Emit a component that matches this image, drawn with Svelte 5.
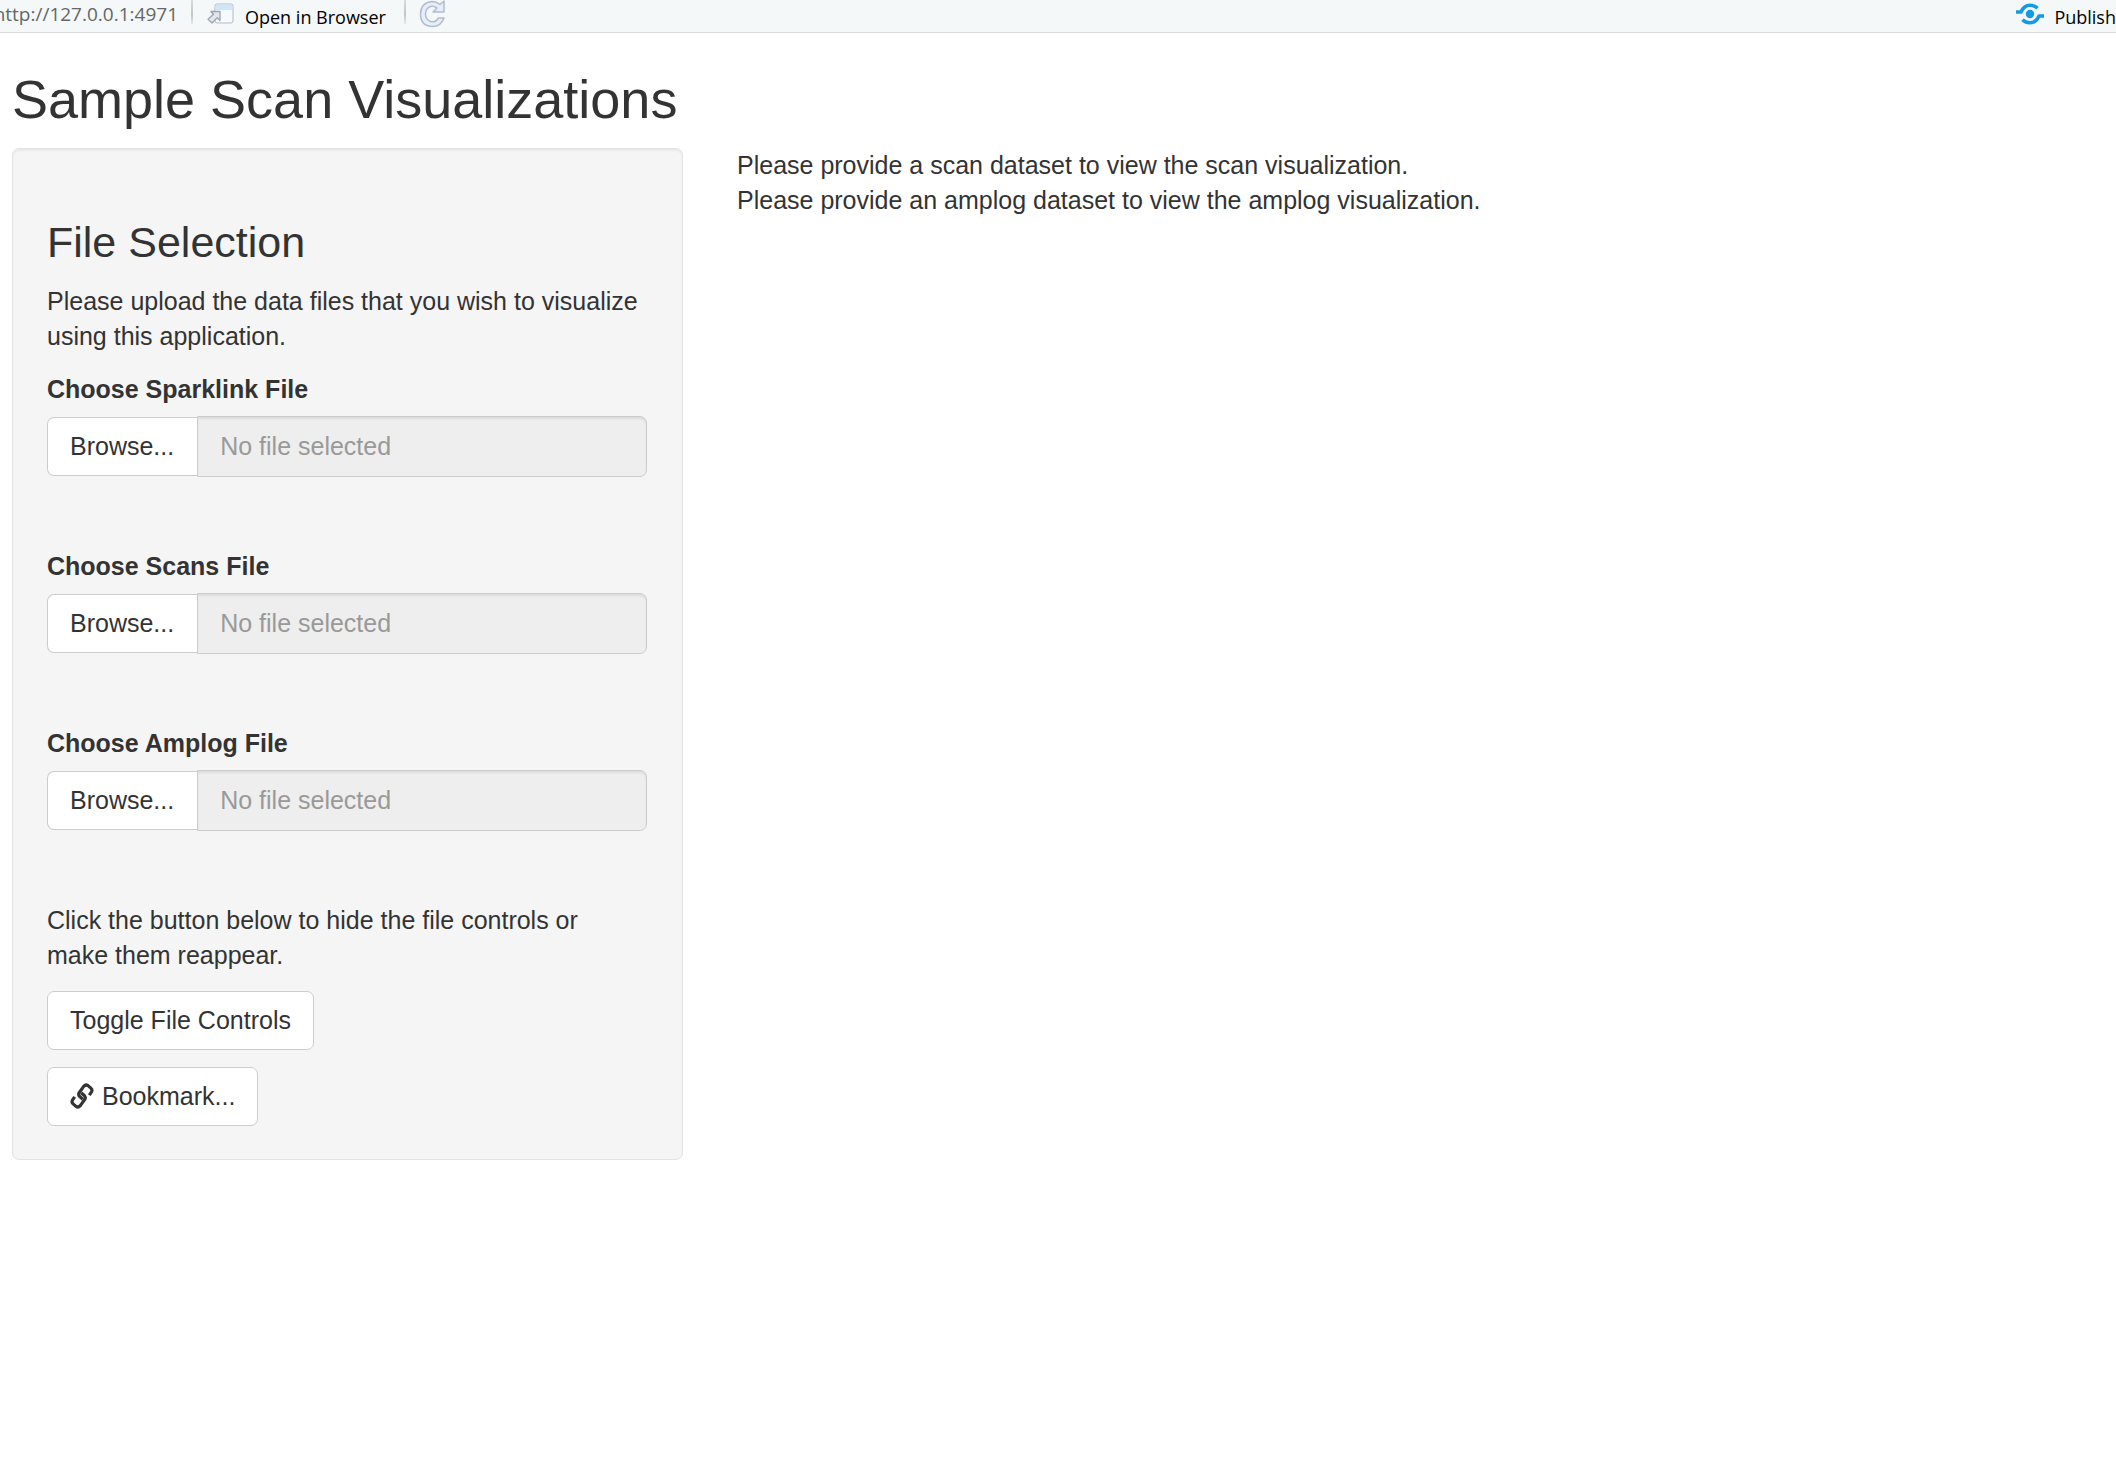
<script>
  let controlsVisible = $state(true);
  let files = $state([
    { id: 'sparklink', label: 'Choose Sparklink File', name: '' },
    { id: 'scans', label: 'Choose Scans File', name: '' },
    { id: 'amplog', label: 'Choose Amplog File', name: '' }
  ]);
  const pickers = {};

  function picked(file, event) {
    file.name = event.target.files[0]?.name ?? '';
  }
</script>

<header class="toolbar">
  <span class="url"><span>http://127.0.0.1:4971</span></span>
  <span class="divider"></span>
  <button class="tool open" type="button">
    <svg width="28" height="22" viewBox="0 0 28 22" aria-hidden="true">
      <rect x="9" y="1" width="18" height="19" rx="2" fill="#f6f9fd" stroke="#b1bac7" />
      <path d="M9.500 7V3q0-1.500 1.500-1.500h14q1.500 0 1.500 1.500v4z" fill="#cde6fb" />
      <path d="M5 8.500h9v9l-2.800-2.800-5.200 5.300-4-3.700 5.500-5z" fill="#e3e7eb" stroke="#9ca5b0" stroke-width="1.300" stroke-linejoin="round" />
    </svg>
    <span>Open in Browser</span>
  </button>
  <span class="divider"></span>
  <button class="tool reload" type="button" aria-label="Reload">
    <svg width="27" height="28" viewBox="0 0 27 28" aria-hidden="true">
      <path d="M25 1v11H14l4-4Q15 5.500 11.500 6.500 6.500 8.500 6.500 14t5 7.500q5 1.500 8-3.500h5.500Q22 26.500 13.500 26.500 1.500 26 1.500 14 2 2.500 13 1.500q4.500 0 8 3z" fill="#e6eefb" stroke="#b4bccb" stroke-width="1.500" stroke-linejoin="round" />
    </svg>
  </button>
  <button class="tool publish" type="button">
    <svg width="30" height="24" viewBox="0 0 30 24" aria-hidden="true">
      <circle cx="15" cy="11" r="4.200" fill="#1499e8" />
      <path d="M1 9h5Q9 2.300 15 2.300q4.500 0 7.500 3M29 13h-5Q21 19.700 15 19.700q-4.500 0-7.500-3" fill="none" stroke="#1499e8" stroke-width="3.600" stroke-linejoin="round" />
    </svg>
    <span>Publish</span>
  </button>
</header>

<main>
  <h1>Sample Scan Visualizations</h1>
  <div class="columns">
    <form class="panel" onsubmit={(e) => e.preventDefault()}>
      {#if controlsVisible}
        <h2>File Selection</h2>
        <p>Please upload the data files that you wish to visualize using this application.</p>
        {#each files as file (file.id)}
          <div class="field">
            <label for={file.id}>{file.label}</label>
            <div class="group">
              <button class="btn" type="button" onclick={() => pickers[file.id].click()}>Browse...</button>
              <input id={file.id} type="text" placeholder="No file selected" value={file.name} readonly />
              <input type="file" hidden bind:this={pickers[file.id]} onchange={(e) => picked(file, e)} />
            </div>
          </div>
        {/each}
      {/if}
      <p>Click the button below to hide the file controls or make them reappear.</p>
      <div class="actions">
        <button class="btn" type="button" onclick={() => (controlsVisible = !controlsVisible)}>Toggle File Controls</button>
        <button class="btn" type="button">
          <svg width="24" height="28" viewBox="0 0 24 28" aria-hidden="true">
            <g fill="none" stroke="#333" stroke-width="3.200" stroke-linejoin="round">
              <path d="M12.800 16.200 9.700 13.500Q8 11.500 9.200 9.600L13.700 3.400Q15.700 1.100 18 2.600L20.600 4.900Q22.900 6.900 21.400 9.200L19.300 12.200" />
              <path d="M12.800 16.200 9.700 13.500Q8 11.500 9.200 9.600L13.700 3.400Q15.700 1.100 18 2.600L20.600 4.900Q22.900 6.900 21.400 9.200L19.300 12.200" transform="rotate(180 12 13)" />
            </g>
          </svg>
          Bookmark...
        </button>
      </div>
    </form>
    <section class="output">
      <div>Please provide a scan dataset to view the scan visualization.</div>
      <div>Please provide an amplog dataset to view the amplog visualization.</div>
    </section>
  </div>
</main>

<style>
  :global(body) {
    margin: 0;
    background: #fff;
    color: #333;
    font: 25px/35px 'Liberation Sans', Arial, sans-serif;
  }

  .toolbar {
    display: flex;
    align-items: flex-start;
    height: 32px;
    overflow: hidden;
    background: #f4f8f9;
    border-bottom: 1px solid #d6dadc;
    font: 19px/28px 'Open Sans', 'Noto Sans', sans-serif;
  }

  .url {
    display: flex;
    justify-content: flex-end;
    width: 178px;
    color: #666;
  }

  .divider {
    width: 2px;
    height: 24px;
    margin: 0 13px;
    background: linear-gradient(#d8dbdd, #c2c5c8 60%, #e6e9ea);
  }

  .tool {
    display: flex;
    align-items: flex-start;
    padding: 0;
    border: 0;
    background: none;
    color: #000;
    font: inherit;
    font-size: 18px;
    line-height: 34px;
    white-space: nowrap;
  }

  .tool svg {
    flex: none;
  }

  .open {
    gap: 11px;
    padding-right: 5px;
  }

  .open svg,
  .publish svg {
    margin-top: 3px;
  }

  .publish {
    gap: 9px;
    margin-left: auto;
  }

  main {
    padding: 37px 37px 36px 12px;
  }

  h1,
  h2 {
    margin: 0;
    font-weight: 400;
  }

  h1 {
    margin-bottom: 20px;
    font-size: 54px;
    line-height: 58px;
  }

  h2 {
    margin: 36px 0 19px;
    font-size: 43px;
    line-height: 46px;
  }

  p {
    margin: 0 0 18px;
    padding-right: 4px;
  }

  .columns {
    display: grid;
    grid-template-columns: 1fr 2fr;
    gap: 54px;
    align-items: start;
  }

  .panel {
    display: flow-root;
    padding: 34px 35px 33px 34px;
    border: 1px solid #e3e3e3;
    border-radius: 7px;
    background: #f5f5f5;
    box-shadow: inset 0 2px 2px rgba(0, 0, 0, 0.05);
  }

  .field {
    margin-bottom: 72px;
  }

  label {
    display: block;
    margin-bottom: 9px;
    font-weight: 700;
  }

  .group {
    display: flex;
    align-items: center;
  }

  .btn {
    display: flex;
    align-items: center;
    gap: 8px;
    padding: 11px 22px;
    border: 1px solid #ccc;
    border-radius: 7px;
    background: #fff;
    color: #333;
    font: inherit;
    white-space: nowrap;
  }

  .group .btn {
    padding-right: 23px;
    border-right: 0;
    border-radius: 7px 0 0 7px;
  }

  input[type='text'] {
    flex: 1;
    min-width: 0;
    box-sizing: border-box;
    height: 61px;
    padding: 11px 22px;
    border: 1px solid #ccc;
    border-radius: 0 7px 7px 0;
    background: #eee;
    box-shadow: inset 0 2px 2px rgba(0, 0, 0, 0.075);
    color: #555;
    font: inherit;
  }

  input::placeholder {
    color: #999;
    opacity: 1;
  }

  .actions {
    display: flex;
    flex-direction: column;
    align-items: flex-start;
    gap: 17px;
  }
</style>
